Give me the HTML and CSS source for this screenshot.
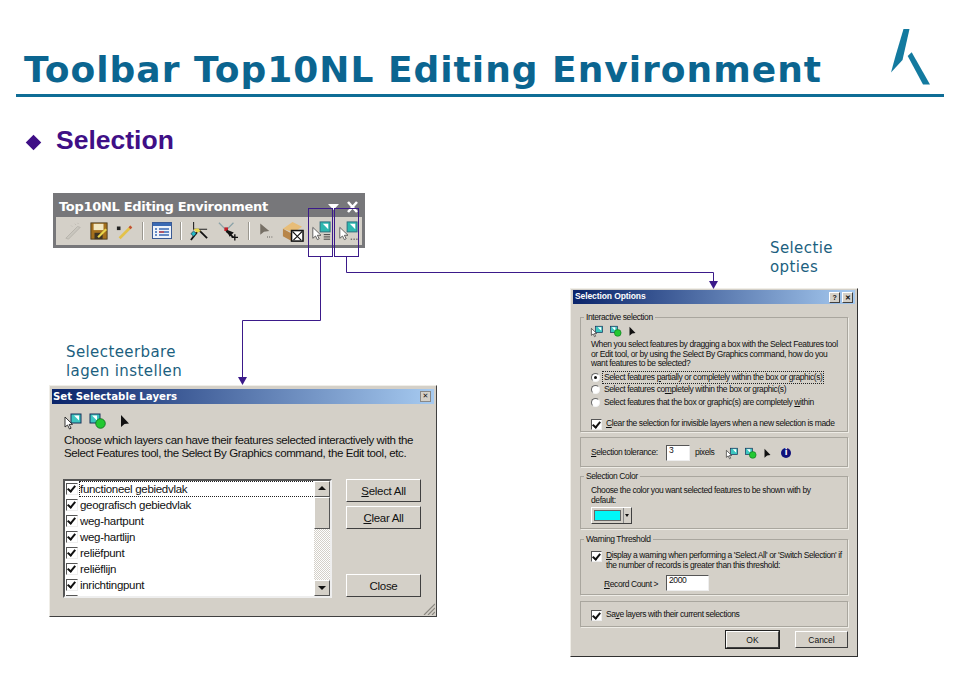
FILE: index.html
```html
<!DOCTYPE html>
<html lang="en">
<head>
  <meta charset="UTF-8">
  <title>Toolbar Top10NL Editing Environment</title>
  <link rel="stylesheet" href="styles.css">
</head>
<body>

<!-- shared icons -->
<svg class="defs">
  <symbol id="i-select" viewBox="0 0 20 17">
    <rect x="8" y="1" width="10" height="9" fill="#3cc6c0" stroke="#17315a"/>
    <path d="M11 2.500h5v5z" fill="#fff"/>
    <path d="M2 4v10l2.500-2 2 4 1.600-.8-2-3.800h3.400z" fill="#fff" stroke="#222" stroke-width=".9"/>
  </symbol>
  <symbol id="i-graphics" viewBox="0 0 20 17">
    <rect x="2" y="1" width="10" height="9" fill="#3cc6c0" stroke="#17315a"/>
    <path d="M4 2.500h5v5z" fill="#fff"/>
    <circle cx="12.500" cy="10.500" r="4.800" fill="#22c832" stroke="#0d6a1a" stroke-width=".8"/>
  </symbol>
  <symbol id="i-arrow" viewBox="0 0 12 17">
    <path d="M2 2v12l3.500-3 4.500-.5z" fill="#111"/>
  </symbol>
</svg>

<div class="slide">
  <header class="slide-head">
    <h1>Toolbar Top10NL Editing Environment</h1>
    <svg class="logo" viewBox="0 0 40 56" width="40" height="56">
      <path d="M13.500 0h6L12.500 31 1 43.500 5.500 27z" fill="#137a9f"/>
      <path d="M17.700 27l4-3.700L40 55.500h-7z" fill="#137a9f"/>
    </svg>
  </header>

  <div class="bullet">
    <span class="diamond"></span>
    <h2>Selection</h2>
  </div>

  <!-- floating toolbar -->
  <div class="toolbar">
    <div class="toolbar-title">
      <span>Top10NL Editing Environment</span>
      <svg viewBox="0 0 32 12" width="32" height="12">
        <path d="M0 3h11l-5.500 6z" fill="#fff"/>
        <path d="M20 1l9 10M29 1l-9 10" stroke="#fff" stroke-width="2.600"/>
      </svg>
    </div>
    <div class="toolbar-icons">
      <svg class="tool" viewBox="0 0 20 20"><path d="M2 18L15 5l3 1-13 13z" fill="#c9c6be" stroke="#b5b2aa"/><path d="M8 4l1 1M12 2l1 1M15 1l1 1" stroke="#b5b2aa"/></svg>
      <svg class="tool" viewBox="0 0 20 20"><rect x="1" y="1" width="18" height="18" fill="#a5701c" stroke="#4a3a1a"/><rect x="4" y="2" width="11" height="7" fill="#f2e7c0"/><rect x="5" y="12" width="9" height="7" fill="#3d3424"/><path d="M9 17l9-9" stroke="#e8d44a" stroke-width="2.500"/></svg>
      <svg class="tool" viewBox="0 0 20 20"><rect x="1" y="5" width="4" height="4" fill="#222"/><path d="M4 18L17 5" stroke="#e3c24a" stroke-width="3"/><path d="M15 7l2-2" stroke="#c0503a" stroke-width="3"/></svg>
      <span class="tb-sep"></span>
      <svg class="tool tool-wide" viewBox="0 0 20 18"><rect x=".5" y=".5" width="19" height="16" fill="#eef3fa" stroke="#3a5a94"/><rect x="1" y="1" width="18" height="3" fill="#3a6ab4"/><path d="M3 7h2M7 7h10M3 10h2M7 10h10M3 13h2M7 13h10" stroke="#3a6ab4" stroke-width="1.400"/><path d="M7 10h5" stroke="#d04040" stroke-width="1.400"/></svg>
      <span class="tb-sep"></span>
      <svg class="tool" viewBox="0 0 20 22"><path d="M4 1v8h15" fill="none" stroke="#222" stroke-width="1.200"/><path d="M1 21l7-9" stroke="#111" stroke-width="2"/><path d="M10 10l9 9" stroke="#111" stroke-width="2"/><path d="M4 9l5-1 3 3-4 2z" fill="#e8d84a"/><path d="M1 14l3-3 3 3-3 3z" fill="#22b8c8" stroke="#111" stroke-width=".6"/></svg>
      <svg class="tool tool-plus" viewBox="0 0 24 22"><path d="M2 2l8 8M18 2l-8 8" stroke="#8aa2a8" stroke-width="1.400"/><rect x="8" y="7" width="4" height="4" fill="#c0202a"/><path d="M10 11l8 7" stroke="#111" stroke-width="2"/><path d="M12 11l2 5 3-3zM16 18h7M19.500 14.500v7" fill="#111" stroke="#111" stroke-width="1.500"/></svg>
      <span class="tb-sep"></span>
      <svg class="tool tool-dim" viewBox="0 0 20 22"><path d="M3 1v15l5-4 7-1z" fill="#777066"/><path d="M12 19h1M15 19h1M18 19h1" stroke="#111"/></svg>
      <svg class="tool tool-box" viewBox="0 0 24 24"><path d="M2 9l10-7 10 5-9 6z" fill="#e8bd78"/><path d="M2 9l9 5v8l-9-5z" fill="#b8864a"/><rect x="11" y="11" width="12" height="11" fill="#fff" stroke="#111" stroke-width="1.600"/><path d="M12 12l5 5 5-5M17 17l-4 4M17 17l4 4" stroke="#111" stroke-width="1.200" fill="none"/></svg>
      <svg class="tool tool-select" viewBox="0 0 22 22"><rect x="10" y="1" width="11" height="11" fill="#2cb8b0" stroke="#2a6a7a"/><path d="M13 3h6v6z" fill="#fff"/><path d="M2 7v12l3-2.500 2 4 2-1-2-3.800h4z" fill="#fff" stroke="#555"/><path d="M14 15h7M14 17.500h7M14 20h7" stroke="#333"/></svg>
      <svg class="tool tool-select" viewBox="0 0 22 22"><rect x="10" y="1" width="11" height="11" fill="#2cb8b0" stroke="#2a6a7a"/><path d="M13 3h6v6z" fill="#fff"/><path d="M2 7v12l3-2.500 2 4 2-1-2-3.800h4z" fill="#fff" stroke="#555"/><path d="M14 20h1.500M17 20h1.500M20 20h1.500" stroke="#333"/></svg>
    </div>
  </div>

  <!-- Set Selectable Layers dialog -->
  <div class="win win-layers">
    <div class="win-title">
      <span>Set Selectable Layers</span>
      <span class="cap-btn cap-flat">&#10005;</span>
    </div>
    <div class="layers-body">
      <div class="icon-row">
        <svg class="ico-lg"><use href="#i-select"/></svg>
        <svg class="ico-lg"><use href="#i-graphics"/></svg>
        <svg class="ico-arrow-lg"><use href="#i-arrow"/></svg>
      </div>
      <p class="layers-text">Choose which layers can have their features selected interactively with the<br>Select Features tool, the Select By Graphics command, the Edit tool, etc.</p>
      <div class="layers-main">
        <div class="listbox">
          <ul class="list">
            <li><i class="check"></i><span class="item-focus">functioneel gebiedvlak</span></li>
            <li><i class="check"></i>geografisch gebiedvlak</li>
            <li><i class="check"></i>weg-hartpunt</li>
            <li><i class="check"></i>weg-hartlijn</li>
            <li><i class="check"></i>reliëfpunt</li>
            <li><i class="check"></i>reliëflijn</li>
            <li><i class="check"></i>inrichtingpunt</li>
            <li><i class="check"></i></li>
          </ul>
          <div class="scrollbar">
            <span class="sb-btn sb-up"></span>
            <span class="sb-thumb"></span>
            <span class="sb-track"></span>
            <span class="sb-btn sb-down"></span>
          </div>
        </div>
        <div class="layers-btns">
          <button class="btn"><u>S</u>elect All</button>
          <button class="btn"><u>C</u>lear All</button>
          <button class="btn btn-close">Close</button>
        </div>
      </div>
    </div>
    <svg class="grip" viewBox="0 0 12 12" width="12" height="12"><path d="M1 12L12 1M5 12l7-7M9 12l3-3" stroke="#8a877f" stroke-width="1.200"/></svg>
  </div>

  <!-- Selection Options dialog -->
  <div class="win win-options">
    <div class="win-title">
      <span>Selection Options</span>
      <span class="cap-btns"><span class="cap-btn">?</span><span class="cap-btn">&#10005;</span></span>
    </div>
    <div class="options-body">
      <fieldset class="group group-interactive">
        <legend>Interactive selection</legend>
        <div class="icon-row icon-row-sm">
          <svg class="ico-sm"><use href="#i-select"/></svg>
          <svg class="ico-sm"><use href="#i-graphics"/></svg>
          <svg class="ico-arrow-sm"><use href="#i-arrow"/></svg>
        </div>
        <p class="para">When you select features by dragging a box with the Select Features tool<br>or Edit tool, or by using the Select By Graphics command, how do you<br>want features to be selected?</p>
        <div class="opt opt-radio opt-first"><i class="radio on"></i><span class="focus-label">Select features <u>p</u>artially or completely within the box or graphic(s)</span></div>
        <div class="opt opt-radio"><i class="radio"></i><span>Select features co<u>m</u>pletely within the box or graphic(s)</span></div>
        <div class="opt opt-radio"><i class="radio"></i><span>Select features that the box or graphic(s) are completely <u>w</u>ithin</span></div>
        <div class="opt opt-clear"><i class="check check-sm"></i><span><u>C</u>lear the selection for invisible layers when a new selection is made</span></div>
      </fieldset>

      <div class="group group-tol">
        <span class="tol-label"><u>S</u>election tolerance:</span>
        <span class="field field-tol">3</span>
        <span class="tol-unit">pixels</span>
        <svg class="ico-sm"><use href="#i-select"/></svg>
        <svg class="ico-sm"><use href="#i-graphics"/></svg>
        <svg class="ico-arrow-sm"><use href="#i-arrow"/></svg>
        <span class="info">i</span>
      </div>

      <fieldset class="group group-color">
        <legend>Selection Color</legend>
        <p class="para para-color">Choose the color you want selected features to be shown with by<br>default:</p>
        <div class="color-btn"><span class="swatch"></span><span class="color-drop"></span></div>
      </fieldset>

      <fieldset class="group group-warn">
        <legend>Warning Threshold</legend>
        <div class="opt opt-warn"><i class="check check-sm"></i><span><u>D</u>isplay a warning when performing a 'Select All' or 'Switch Selection' if<br>the number of records is greater than this threshold:</span></div>
        <div class="record"><span class="record-label"><u>R</u>ecord Count &gt;</span><span class="field field-count">2000</span></div>
      </fieldset>

      <div class="group group-save">
        <i class="check check-sm"></i><span>Sa<u>v</u>e layers with their current selections</span>
      </div>

      <div class="options-btns">
        <button class="btn btn-sm btn-default">OK</button>
        <button class="btn btn-sm">Cancel</button>
      </div>
    </div>
  </div>

  <!-- callouts -->
  <p class="note note-layers">Selecteerbare<br>lagen instellen</p>
  <p class="note note-options">Selectie<br>opties</p>

  <svg class="connectors" viewBox="0 0 960 683" width="960" height="683">
    <g fill="none" stroke="#3b1a8a" stroke-width="1">
      <rect x="308.500" y="208.500" width="24" height="48"/>
      <rect x="334.500" y="208.500" width="24" height="48"/>
      <path d="M320.500 257v63.500H242.500V378"/>
      <path d="M346.500 257v15.500H713.500V282"/>
    </g>
    <path d="M238 377h9l-4.500 8z" fill="#3b1a8a"/>
    <path d="M709 281h9l-4.500 8z" fill="#3b1a8a"/>
  </svg>
</div>

</body>
</html>
```

FILE: styles.css
```css
/* Page */
body {
  margin: 0;
  background: #fff;
  font-family: "Liberation Sans", Arial, sans-serif;
}

.defs {
  display: none;
}

.slide {
  position: relative;
  width: 960px;
  height: 683px;
  overflow: hidden;
}

/* Slide heading */
.slide-head {
  display: flex;
  justify-content: space-between;
  align-items: flex-end;
  height: 94px;
  margin: 0 16px;
  padding: 0 14px 0 8px;
  border-bottom: 3px solid #0f6d96;
}

.slide-head h1 {
  margin: 0 0 3px;
  font-family: "DejaVu Sans", Verdana, sans-serif;
  font-size: 36px;
  font-weight: bold;
  line-height: 42px;
  letter-spacing: 1px;
  color: #0b6590;
  white-space: nowrap;
}

.logo {
  margin-bottom: 9px;
}

.bullet {
  display: flex;
  align-items: center;
  gap: 17px;
  margin: 27px 0 0 28px;
}

.bullet h2 {
  margin: 0;
  font-size: 26.5px;
  line-height: 32px;
  font-weight: bold;
  color: #3f0f86;
}

.diamond {
  width: 11px;
  height: 11px;
  margin-top: 4px;
  background: #3f0f86;
  transform: rotate(45deg);
}

/* Callout labels */
.note {
  position: absolute;
  margin: 0;
  font-family: "DejaVu Sans", Verdana, sans-serif;
  font-size: 15px;
  line-height: 19px;
  letter-spacing: 0.4px;
  color: #1c5f80;
}

.note-layers {
  left: 66px;
  top: 343px;
}

.note-options {
  left: 770px;
  top: 239px;
}

.connectors {
  position: absolute;
  left: 0;
  top: 0;
  pointer-events: none;
}

/* Floating toolbar */
.toolbar {
  position: absolute;
  left: 53px;
  top: 193px;
  width: 306px;
  height: 49px;
  border: 3px solid #77777a;
  background: #d4d0c8;
}

.toolbar-title {
  display: flex;
  justify-content: space-between;
  align-items: center;
  height: 21px;
  padding: 0 2px 0 3px;
  background: #77777a;
  color: #fff;
  font-family: "DejaVu Sans", Verdana, sans-serif;
  font-size: 13px;
  font-weight: bold;
  letter-spacing: -0.3px;
}

.toolbar-icons {
  display: flex;
  align-items: center;
  gap: 8px;
  height: 28px;
  padding-left: 8px;
}

.tool {
  flex: none;
  width: 18px;
  height: 20px;
}

.tool-wide {
  width: 20px;
}

.tool-plus {
  width: 24px;
}

.tool-dim {
  width: 15px;
}

.tool-box {
  width: 23px;
  height: 23px;
}

.tool-select {
  width: 20px;
  height: 22px;
  margin-left: -1px;
}

.tb-sep {
  flex: none;
  width: 1px;
  height: 18px;
  background: #9a978f;
  border-right: 1px solid #fff;
}

/* Classic windows */
.win {
  position: absolute;
  box-sizing: border-box;
  padding: 2px;
  border: 1px solid;
  border-color: #f0eee8 #404040 #404040 #f0eee8;
  background: #d4d0c8;
  color: #111;
}

.win-title {
  display: flex;
  justify-content: space-between;
  align-items: center;
  background: linear-gradient(to right, #0a246a, #a6caf0);
  color: #fff;
  font-weight: bold;
}

.cap-btns {
  display: flex;
  gap: 2px;
}

.cap-btn {
  box-sizing: border-box;
  display: block;
  width: 11px;
  height: 11px;
  border: 1px solid;
  border-color: #fff #404040 #404040 #fff;
  background: #d4d0c8;
  color: #111;
  font-size: 7px;
  line-height: 9px;
  text-align: center;
}

button.btn {
  box-sizing: border-box;
  display: block;
  padding: 0;
  border: 1px solid;
  border-color: #fff #404040 #404040 #fff;
  background: #d4d0c8;
  color: #111;
  font-family: "Liberation Sans", Arial, sans-serif;
}

.check {
  flex: none;
  position: relative;
  display: inline-block;
  box-sizing: border-box;
  width: 12px;
  height: 12px;
  border: 1px solid;
  border-color: #555 #eee #eee #555;
  background: #fff;
}

.check::after {
  content: "";
  position: absolute;
  left: 2px;
  top: 0;
  width: 3px;
  height: 6px;
  border: solid #111;
  border-width: 0 2px 2px 0;
  transform: rotate(40deg);
}

.check-sm {
  width: 11px;
  height: 11px;
}

.radio {
  flex: none;
  position: relative;
  display: inline-block;
  box-sizing: border-box;
  width: 9px;
  height: 9px;
  border: 1px solid;
  border-color: #666 #f4f4f4 #f4f4f4 #666;
  border-radius: 50%;
  background: #fff;
}

.radio.on::after {
  content: "";
  position: absolute;
  left: 2px;
  top: 2px;
  width: 3px;
  height: 3px;
  border-radius: 50%;
  background: #111;
}

.icon-row {
  display: flex;
  align-items: center;
}

/* Set Selectable Layers */
.win-layers {
  left: 49px;
  top: 385px;
  width: 388px;
  height: 232px;
  font-size: 11.5px;
  letter-spacing: -0.4px;
}

.win-layers .win-title {
  height: 15px;
  margin-top: 1px;
  padding: 0 3px 0 1px;
  font-family: "DejaVu Sans", Verdana, sans-serif;
  font-size: 10.2px;
  letter-spacing: 0;
}

.cap-flat {
  border-color: #888;
}

.layers-body {
  padding: 9px 0 0 11px;
}

.ico-lg {
  width: 20px;
  height: 17px;
  margin-right: 5px;
}

.ico-arrow-lg {
  width: 12px;
  height: 17px;
  margin-left: 6px;
}

.layers-text {
  margin: 4px 0 0 1px;
  line-height: 13px;
  white-space: nowrap;
}

.layers-main {
  display: flex;
  margin-top: 19px;
}

.listbox {
  display: flex;
  flex: none;
  box-sizing: border-box;
  width: 269px;
  height: 119px;
  border: 2px solid;
  border-color: #555 #eee #eee #555;
  background: #fff;
  overflow: hidden;
}

.list {
  flex: 1;
  margin: 0;
  padding: 0;
  list-style: none;
  letter-spacing: -0.3px;
}

.list li {
  display: flex;
  align-items: center;
  gap: 2px;
  box-sizing: border-box;
  height: 16px;
  padding-left: 1px;
}

.item-focus {
  flex: 1;
  line-height: 14px;
  outline: 1px dotted #222;
  outline-offset: 0;
}

.scrollbar {
  display: flex;
  flex-direction: column;
  flex: none;
  width: 16px;
}

.sb-btn,
.sb-thumb {
  flex: none;
  box-sizing: border-box;
  border: 1px solid;
  border-color: #fff #555 #555 #fff;
  background: #d4d0c8;
}

.sb-btn {
  position: relative;
  height: 16px;
}

.sb-btn::after {
  content: "";
  position: absolute;
  left: 3px;
  border-left: 4px solid transparent;
  border-right: 4px solid transparent;
}

.sb-up::after {
  top: 4px;
  border-bottom: 4px solid #111;
}

.sb-down::after {
  top: 5px;
  border-top: 4px solid #111;
}

.sb-thumb {
  height: 32px;
}

.sb-track {
  flex: 1;
  background: repeating-conic-gradient(#d4d0c8 0 25%, #fff 0 50%) 0 0 / 2px 2px;
}

.layers-btns {
  display: flex;
  flex-direction: column;
  margin-left: 14px;
}

.layers-btns .btn {
  width: 75px;
  height: 23px;
  margin-bottom: 4px;
  font-size: 11.5px;
  letter-spacing: -0.3px;
}

.layers-btns .btn-close {
  margin-top: 41px;
}

.grip {
  position: absolute;
  right: 1px;
  bottom: 1px;
}

/* Selection Options */
.win-options {
  left: 570px;
  top: 288px;
  width: 288px;
  height: 369px;
  padding-top: 1px;
  border-color: #f0eee8 #303030 #303030 #f0eee8;
  font-size: 8.5px;
  line-height: 9.7px;
  letter-spacing: -0.4px;
}

.win-options .win-title {
  height: 14px;
  padding: 0 2px;
  font-size: 8.5px;
  letter-spacing: -0.1px;
}

.options-body {
  padding: 0 7px;
}

.group {
  box-sizing: border-box;
  margin: 0;
  border: 1px solid #a9a69e;
  box-shadow: 1px 1px 0 #eeece6;
}

fieldset.group {
  min-width: 0;
  padding: 0 0 0 10px;
}

fieldset.group legend {
  margin-left: -7px;
  padding: 0 2px;
  line-height: 11px;
}

.para {
  margin: 0;
  white-space: nowrap;
}

.para-color {
  margin-top: 4px;
}

.group-interactive {
  height: 120px;
  margin-top: 8px;
}

.icon-row-sm {
  height: 13px;
  margin: 2px 0 2px -1px;
}

.ico-sm {
  flex: none;
  width: 14px;
  height: 13px;
  margin-right: 5px;
}

.ico-arrow-sm {
  flex: none;
  width: 9px;
  height: 13px;
}

.opt {
  display: flex;
  align-items: center;
  gap: 4px;
  white-space: nowrap;
}

.opt-radio {
  height: 12.5px;
}

.opt-first {
  margin-top: 2px;
}

.focus-label {
  outline: 1px dotted #222;
  outline-offset: 1px;
}

.opt-clear {
  margin-top: 10px;
}

.group-tol {
  display: flex;
  align-items: center;
  height: 30px;
  margin-top: 5px;
  padding: 2px 0 0 10px;
}

.field {
  box-sizing: border-box;
  display: block;
  border: 1px solid;
  border-color: #555 #eee #eee #555;
  background: #fff;
  padding: 0 2px;
}

.tol-label {
  flex: none;
  width: 75px;
}

.field-tol {
  flex: none;
  width: 24px;
  height: 16px;
  margin-right: 5px;
}

.tol-unit {
  flex: none;
  width: 30px;
}

.info {
  flex: none;
  width: 10px;
  height: 10px;
  margin-left: 9px;
  border-radius: 50%;
  background: #10107a;
  color: #fff;
  font-family: "DejaVu Sans", sans-serif;
  font-size: 8px;
  font-weight: bold;
  line-height: 10px;
  letter-spacing: 0;
  text-align: center;
}

.group-color {
  height: 58px;
  margin-top: 4px;
}

.color-btn {
  display: flex;
  box-sizing: border-box;
  width: 41px;
  height: 17px;
  margin-top: 2px;
  border: 1px solid;
  border-color: #fff #404040 #404040 #fff;
}

.swatch {
  flex: 1;
  margin: 2px;
  background: #00f8f8;
  border: 1px solid #666;
}

.color-drop {
  position: relative;
  width: 7px;
  border-left: 1px solid #888;
}

.color-drop::after {
  content: "";
  position: absolute;
  left: 1px;
  top: 6px;
  border-left: 2px solid transparent;
  border-right: 2px solid transparent;
  border-top: 3px solid #111;
}

.group-warn {
  height: 61px;
  margin-top: 5px;
}

.opt-warn {
  align-items: flex-start;
  margin-top: 6px;
}

.record {
  display: flex;
  align-items: center;
  margin: 5px 0 0 13px;
}

.record-label {
  width: 62px;
  padding-top: 2px;
}

.field-count {
  width: 43px;
  height: 16px;
}

.group-save {
  display: flex;
  align-items: center;
  gap: 4px;
  height: 26px;
  margin-top: 6px;
  padding: 2px 0 0 10px;
}

.options-btns {
  display: flex;
  justify-content: flex-end;
  gap: 16px;
  margin-top: 4px;
}

.btn-sm {
  width: 53px;
  height: 17px;
  font-size: 8.5px;
}

button.btn-default {
  outline: 1px solid #222;
}
```
